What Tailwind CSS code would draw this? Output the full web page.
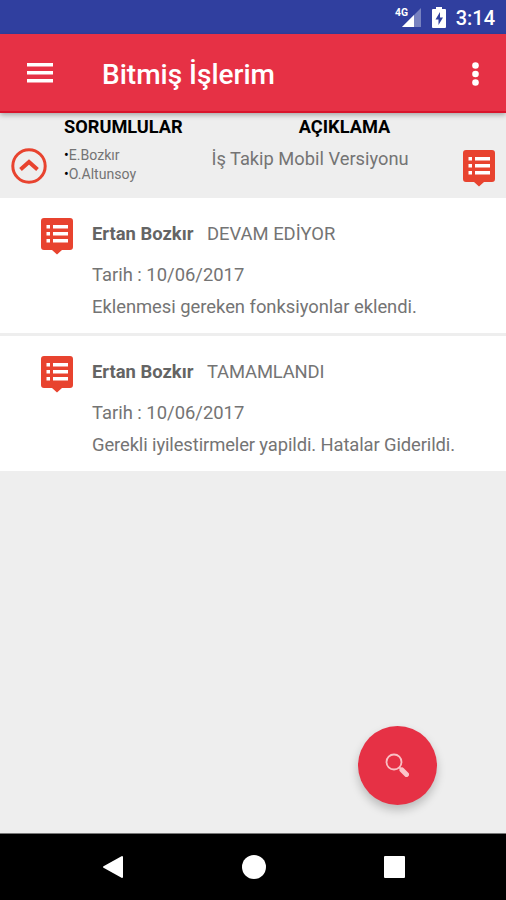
<!DOCTYPE html>
<html lang="tr">
<head>
  <meta charset="UTF-8">
  <meta name="viewport" content="width=device-width, initial-scale=1.0">
  <title>Bitmiş İşlerim</title>
  <script src="https://cdn.jsdelivr.net/npm/@tailwindcss/browser@4"></script>
</head>
<body class="bg-[#eeeeee] font-['Roboto',sans-serif] h-screen flex flex-col overflow-hidden text-[#747474]">

  <!-- Shared list icon -->
  <svg class="hidden">
    <symbol id="list-icon" viewBox="0 0 32 37">
      <path fill="#e8432f" d="M3 0h26a3 3 0 0 1 3 3v26a3 3 0 0 1-3 3h-8l-5 4.500-5-4.500H3a3 3 0 0 1-3-3V3a3 3 0 0 1 3-3z"/>
      <path fill="#fff" d="M5.500 7h3.500v3.500H5.500zM12 7h15v3.500H12zM5.500 14h3.500v3.500H5.500zM12 14h15v3.500H12zM5.500 21h3.500v3.500H5.500zM12 21h15v3.500H12z"/>
    </symbol>
  </svg>

  <!-- Status bar -->
  <div class="h-[34px] shrink-0 bg-[#303f9f] flex items-center justify-end pr-[11px] text-white">
    <svg class="w-[27px] h-[22px]" viewBox="0 0 27 22">
      <path d="M27 2v19H8z" fill="#fff" opacity=".35"/>
      <path d="M20 9v12H8z" fill="#fff"/>
      <rect width="15" height="11" fill="#303f9f"/>
      <text x="1" y="10" font-size="11" font-weight="700" fill="#fff" textLength="13" lengthAdjust="spacingAndGlyphs">4G</text>
    </svg>
    <svg class="w-[14px] h-[21px] ml-[11px] mr-[10px]" viewBox="0 0 14 21">
      <path d="M4 0h6v2h3a1 1 0 0 1 1 1v17a1 1 0 0 1-1 1H1a1 1 0 0 1-1-1V3a1 1 0 0 1 1-1h3z" fill="#fff"/>
      <path d="M8 5 3.500 12.500H6.500V18L11 10.500H8z" fill="#303f9f"/>
    </svg>
    <span class="text-[20px] font-medium leading-none pt-[2px]">3:14</span>
  </div>

  <!-- App bar -->
  <header class="relative z-10 h-[79px] shrink-0 bg-[#e63145] border-b-2 border-[#d9142c] shadow-[0_2px_5px_rgba(0,0,0,0.3)] flex items-center pl-[27px] pr-[27px] text-white">
    <svg class="w-[26px] h-5" viewBox="0 0 26 20" fill="#fff">
      <path d="M0 0h26v3.500H0zM0 8h26v3.500H0zM0 16h26v3.500H0z"/>
    </svg>
    <h1 class="ml-[49px] text-[28px] font-medium leading-none pt-1">Bitmiş İşlerim</h1>
    <svg class="w-[7px] h-6 ml-auto mt-[2px]" viewBox="0 0 7 24" fill="#fff">
      <circle cx="3.500" cy="3.500" r="3.300"/>
      <circle cx="3.500" cy="12" r="3.300"/>
      <circle cx="3.500" cy="20.500" r="3.300"/>
    </svg>
  </header>

  <!-- Task header -->
  <section class="h-[85px] shrink-0 flex pl-[11px] pr-[11px]">
    <svg class="w-9 h-9 mt-[35px]" viewBox="0 0 36 36" fill="none" stroke="#e8432f">
      <circle cx="18" cy="18" r="16.200" stroke-width="3"/>
      <path d="M9.500 21.500 18 14l8.500 7.500" stroke-width="4"/>
    </svg>
    <div class="w-[135px] ml-[17px] pt-[2px]">
      <h2 class="text-[18.200px] font-bold leading-6 text-black">SORUMLULAR</h2>
      <ul class="text-[14.100px] leading-[19px] mt-[7px]">
        <li><span class="text-black">•</span>E.Bozkır</li>
        <li><span class="text-black">•</span>O.Altunsoy</li>
      </ul>
    </div>
    <div class="w-[222px] pt-[2px] text-center whitespace-nowrap">
      <h2 class="text-[18.200px] font-bold leading-6 text-black ml-[69px] w-[153px]">AÇIKLAMA</h2>
      <p class="text-[18.300px] leading-6 mt-2">İş Takip Mobil Versiyonu</p>
    </div>
    <svg class="w-8 h-[37px] mt-[37px] ml-auto"><use href="#list-icon"/></svg>
  </section>

  <!-- Task notes -->
  <main class="flex-1 text-[18.400px] leading-8">
    <article class="h-[135px] bg-white flex pt-5 pl-[41px]">
      <svg class="w-8 h-[37px]"><use href="#list-icon"/></svg>
      <div class="ml-[19px] whitespace-nowrap">
        <div class="flex"><b class="font-bold w-[115px] text-[#646464]">Ertan Bozkır</b><span>DEVAM EDİYOR</span></div>
        <p class="mt-[9px]">Tarih : 10/06/2017</p>
        <p class="tracking-[-0.030px]">Eklenmesi gereken fonksiyonlar eklendi.</p>
      </div>
    </article>
    <article class="h-[135px] bg-white flex pt-5 pl-[41px] mt-[3px]">
      <svg class="w-8 h-[37px]"><use href="#list-icon"/></svg>
      <div class="ml-[19px] whitespace-nowrap">
        <div class="flex"><b class="font-bold w-[115px] text-[#646464]">Ertan Bozkır</b><span class="tracking-[-0.150px]">TAMAMLANDI</span></div>
        <p class="mt-[9px]">Tarih : 10/06/2017</p>
        <p class="tracking-[-0.110px]">Gerekli iyilestirmeler yapildi. Hatalar Giderildi.</p>
      </div>
    </article>
  </main>

  <!-- Search button -->
  <button class="absolute left-[358px] top-[726px] w-[79px] h-[79px] rounded-full bg-[#e63145] shadow-[0_5px_10px_rgba(0,0,0,0.22)] flex items-center justify-center">
    <svg class="w-6 h-6 mr-[2px] mb-[2px]" viewBox="0 0 24 24" fill="none">
      <circle cx="9" cy="9" r="7.500" stroke="#f9c0c4" stroke-width="1.800"/>
      <path d="M14 14l3 3" stroke="#f9c0c4" stroke-width="2"/>
      <path d="M17 17l4.500 4.500" stroke="#fbc4c8" stroke-width="5" stroke-linecap="round"/>
    </svg>
  </button>

  <!-- Navigation bar -->
  <nav class="h-[67px] shrink-0 bg-black border-t border-[#777] flex items-center justify-between pl-[102px] pr-[101px]">
    <svg class="w-[22px] h-6" viewBox="0 0 22 24"><path d="M2 12 20 2v20z" fill="#fff" stroke="#fff" stroke-width="2" stroke-linejoin="round"/></svg>
    <div class="w-6 h-6 rounded-full bg-white"></div>
    <div class="w-[21px] h-[22px] rounded-[1px] bg-white"></div>
  </nav>

</body>
</html>
